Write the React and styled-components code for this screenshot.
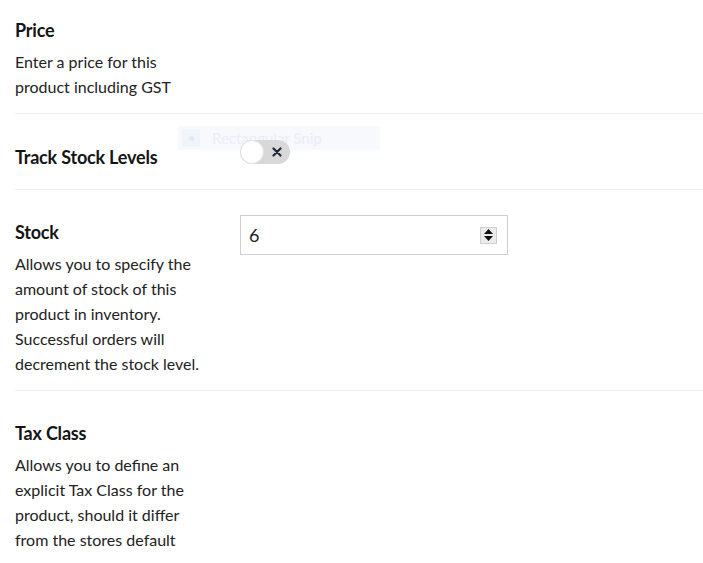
import React from 'react';
import styled, { createGlobalStyle } from 'styled-components';

const Global = createGlobalStyle`
  body {
    margin: 0;
    background: #fff;
    font-family: Lato, "Noto Sans", sans-serif;
    color: #1c1c1c;
  }
`;

const Page = styled.div`
  position: relative;
  padding-left: 15px;
`;

const Row = styled.div`
  display: grid;
  grid-template-columns: 225px 1fr;
  padding: ${p => p.top}px 0 ${p => p.bottom}px;
  border-bottom: ${p => (p.last ? 'none' : '1px solid #efefef')};
`;

const Label = styled.div`
  max-width: 196px;
`;

const Title = styled.div`
  font-size: 18px;
  font-weight: 700;
  line-height: 34px;
  color: #141414;
  letter-spacing: -0.2px;
`;

const Help = styled.div`
  margin-top: 2px;
  font-size: 16px;
  line-height: 25px;
  color: #222;
`;

const Toggle = styled.div`
  position: relative;
  z-index: 1;
  width: 50px;
  height: 24px;
  border-radius: 12px;
  background: #d8d8d8;
  display: flex;
  align-items: center;
  justify-content: space-between;
  padding: 0 8px 0 1px;
  box-sizing: border-box;
`;

const Knob = styled.div`
  width: 22px;
  height: 22px;
  border-radius: 50%;
  background: #fff;
  box-shadow: 0 0 0 1px #e2e2e2;
`;

const Field = styled.div`
  width: 268px;
  height: 40px;
  box-sizing: border-box;
  border: 1px solid #cfcfcf;
  display: flex;
  align-items: center;
  justify-content: space-between;
  padding: 0 10px 0 8px;
  font-size: 18px;
  color: #222;
`;

const Spinner = styled.div`
  width: 17px;
  height: 17px;
  background: #ececec;
  border: 1px solid #cfcfcf;
  box-sizing: border-box;
  display: flex;
  flex-direction: column;
  align-items: center;
  justify-content: space-around;
`;

const Ghost = styled.div`
  position: absolute;
  left: 178px;
  top: 126px;
  width: 202px;
  height: 24px;
  background: #f7f9fd;
  display: flex;
  align-items: center;
  gap: 12px;
  padding-left: 4px;
  box-sizing: border-box;
  font-size: 15px;
  color: #e9eef6;
`;

const GhostIcon = styled.div`
  width: 18px;
  height: 18px;
  background: #f0f4fb;
  display: flex;
  align-items: center;
  justify-content: center;
  &::after {
    content: '';
    width: 5px;
    height: 5px;
    border-radius: 50%;
    background: #e3e9f3;
  }
`;

const Item = ({ title, help, top = 25, bottom = 14, last, children }) => (
  <Row top={top} bottom={bottom} last={last}>
    <Label>
      <Title>{title}</Title>
      {help && <Help>{help}</Help>}
    </Label>
    <div>{children}</div>
  </Row>
);

const App = () => (
  <>
    <Global />
    <Page>
      <Ghost>
        <GhostIcon />
        Rectangular Snip
      </Ghost>
      <Item top={13} title="Price" help="Enter a price for this product including GST" />
      <Item top={26} bottom={15} title="Track Stock Levels">
        <Toggle>
          <Knob />
          <svg width="10" height="10" viewBox="0 0 10 10">
            <path d="M1.5 1.5 L8.5 8.5 M8.5 1.5 L1.5 8.5" stroke="#1e2540" strokeWidth="2.2" strokeLinecap="round" />
          </svg>
        </Toggle>
      </Item>
      <Item
        title="Stock"
        help="Allows you to specify the amount of stock of this product in inventory. Successful orders will decrement the stock level."
      >
        <Field>
          <span>6</span>
          <Spinner>
            <svg width="9" height="5" viewBox="0 0 9 5"><path d="M4.5 0 L9 5 L0 5 Z" fill="#111" /></svg>
            <svg width="9" height="5" viewBox="0 0 9 5"><path d="M0 0 L9 0 L4.5 5 Z" fill="#111" /></svg>
          </Spinner>
        </Field>
      </Item>
      <Item
        last
        title="Tax Class"
        help="Allows you to define an explicit Tax Class for the product, should it differ from the stores default"
      />
    </Page>
  </>
);

export default App;
